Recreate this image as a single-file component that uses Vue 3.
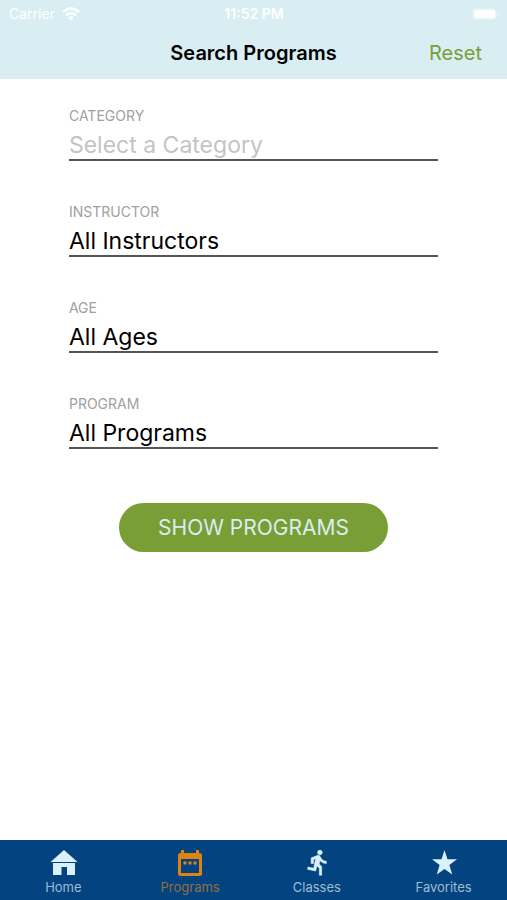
<script setup>
import { ref } from 'vue'

const blank = () => ({ category: '', instructor: 'All Instructors', age: 'All Ages', program: 'All Programs' })
const form = ref(blank())
const active = ref('Programs')

const fields = [
  { key: 'category', label: 'CATEGORY', option: 'Select a Category', value: '' },
  { key: 'instructor', label: 'INSTRUCTOR', option: 'All Instructors', value: 'All Instructors' },
  { key: 'age', label: 'AGE', option: 'All Ages', value: 'All Ages' },
  { key: 'program', label: 'PROGRAM', option: 'All Programs', value: 'All Programs' },
]

const tabs = [
  { name: 'Home', box: '0 0 28 28', path: 'M15 0 28.500 12H1.500ZM4 13H26V25H18V17H12.500V25H4Z' },
  { name: 'Programs', box: '0 0 28 28', path: 'M5 0H8V3H20V0H23V3H23.500Q26 3 26 5.500V23.500Q26 26 23.500 26H4.500Q2 26 2 23.500V5.500Q2 3 4.500 3H5ZM5 9V23H23V9ZM7.500 11.500H10.500V14.500H7.500ZM12.500 11.500H15.500V14.500H12.500ZM17.500 11.500H20.500V14.500H17.500Z' },
  { name: 'Classes', box: '-1 1.400 24 24', stroke: 0.5, path: 'M13.490 5.480c1.100 0 2-.9 2-2s-.9-2-2-2-2 .9-2 2 .9 2 2 2zm-3.600 13.900l1-4.400 2.100 2v6h2v-7.500l-2.100-2 .6-3c1.300 1.500 3.300 2.500 5.500 2.500v-2c-1.900 0-3.500-1-4.300-2.400l-1-1.600c-.4-.6-1-1-1.700-1-.3 0-.5.1-.8.1l-5.200 2.200v4.700h2v-3.400l1.800-.7-1.600 8.100-4.900-1-.4 2 7 1.400z' },
  { name: 'Favorites', box: '0 0 28 28', path: 'M14.500 0 17.500 9.200H27L19.400 15L22.200 24.500L14.500 18.900L6.800 24.500L9.600 15L2 9.200H11.500Z' },
]
</script>

<template>
  <div class="screen">
    <header>
      <div class="status">
        <span class="carrier">Carrier
          <svg class="wifi" viewBox="0 0 18 14" aria-hidden="true">
            <path d="M1 5Q9-2 17 5M4 8.200Q9 4 14 8.200" fill="none" stroke="currentColor" stroke-width="2.600" />
            <path d="M6 10.500Q9 8 12 10.500L9 13.600Z" fill="currentColor" />
          </svg>
        </span>
        <span class="time">11:52 PM</span>
        <svg class="battery" viewBox="0 0 27 12" aria-hidden="true">
          <rect x=".5" y=".5" width="24" height="11" rx="3" fill="#fff" fill-opacity=".4" />
          <rect x="2" y="2" width="21" height="8" rx="2" fill="#fff" />
          <path d="M25.500 4Q28 6 25.500 8Z" fill="#fff" fill-opacity=".4" />
        </svg>
      </div>
      <div class="navbar">
        <h1>Search Programs</h1>
        <button type="button" class="reset" @click="form = blank()">Reset</button>
      </div>
    </header>

    <main>
      <form @submit.prevent>
        <div v-for="f in fields" :key="f.key" class="field">
          <label :for="f.key">{{ f.label }}</label>
          <select :id="f.key" v-model="form[f.key]" :class="{ empty: !form[f.key] }">
            <option :value="f.value">{{ f.option }}</option>
          </select>
        </div>
        <button type="submit" class="show">SHOW PROGRAMS</button>
      </form>
    </main>

    <nav>
      <a v-for="t in tabs" :key="t.name" href="#" :class="{ active: t.name === active }" @click.prevent="active = t.name">
        <svg :viewBox="t.box" aria-hidden="true">
          <path :d="t.path" fill="currentColor" fill-rule="evenodd" stroke="currentColor" :stroke-width="t.stroke || 0" />
        </svg>
        <span>{{ t.name }}</span>
      </a>
    </nav>
  </div>
</template>

<style>
body {
  margin: 0;
}
</style>

<style scoped>
.screen {
  display: flex;
  flex-direction: column;
  min-height: 100vh;
  background: #fff;
  font-family: Inter, "Liberation Sans", sans-serif;
  color: #000;
}
header {
  background: #d9eef2;
}
.status {
  display: grid;
  grid-template-columns: 1fr auto 1fr;
  align-items: center;
  height: 27px;
  padding: 0 8px 0 9px;
  font-size: 14px;
  color: #fff;
}
.carrier {
  display: flex;
  align-items: center;
  gap: 7px;
}
.wifi {
  width: 18px;
  height: 14px;
}
.time {
  font-weight: 600;
}
.battery {
  justify-self: end;
  width: 27px;
  height: 12px;
}
.navbar {
  display: grid;
  grid-template-columns: 1fr auto 1fr;
  align-items: center;
  height: 52px;
  padding: 0 25px;
}
h1 {
  grid-column: 2;
  margin: 0;
  font-size: 20px;
  font-weight: 600;
}
button {
  border: 0;
  padding: 0;
  font-family: inherit;
  cursor: pointer;
}
.reset {
  justify-self: end;
  background: none;
  font-size: 20px;
  color: #789e35;
}
main {
  flex: 1;
  padding: 28px 13.6% 0;
}
form {
  display: flex;
  flex-direction: column;
  gap: 42px;
}
.field {
  display: flex;
  flex-direction: column;
}
label {
  font-size: 14px;
  line-height: 18px;
  color: #a0a0a0;
}
select {
  appearance: none;
  box-sizing: border-box;
  width: 100%;
  height: 36px;
  margin: 0;
  padding: 6px 0 0;
  border: 0;
  border-bottom: 2px solid #555;
  border-radius: 0;
  background: none;
  font-family: inherit;
  font-size: 23px;
  color: #000;
}
select.empty {
  color: #c4c4c6;
}
.show {
  align-self: center;
  width: 73%;
  height: 49px;
  margin-top: 12px;
  border-radius: 25px;
  background: #789e35;
  font-size: 21px;
  color: #d9eef2;
}
nav {
  display: grid;
  grid-template-columns: repeat(4, 1fr);
  height: 60px;
  background: #034480;
}
nav a {
  display: flex;
  flex-direction: column;
  align-items: center;
  padding-top: 10px;
  font-size: 13px;
  line-height: 18px;
  text-decoration: none;
  color: #d9f1fa;
}
nav svg {
  width: 28px;
  height: 28px;
}
nav span {
  color: #9dbdd4;
}
nav a.active {
  color: #dc8410;
}
nav a.active span {
  color: #91703f;
}
</style>
